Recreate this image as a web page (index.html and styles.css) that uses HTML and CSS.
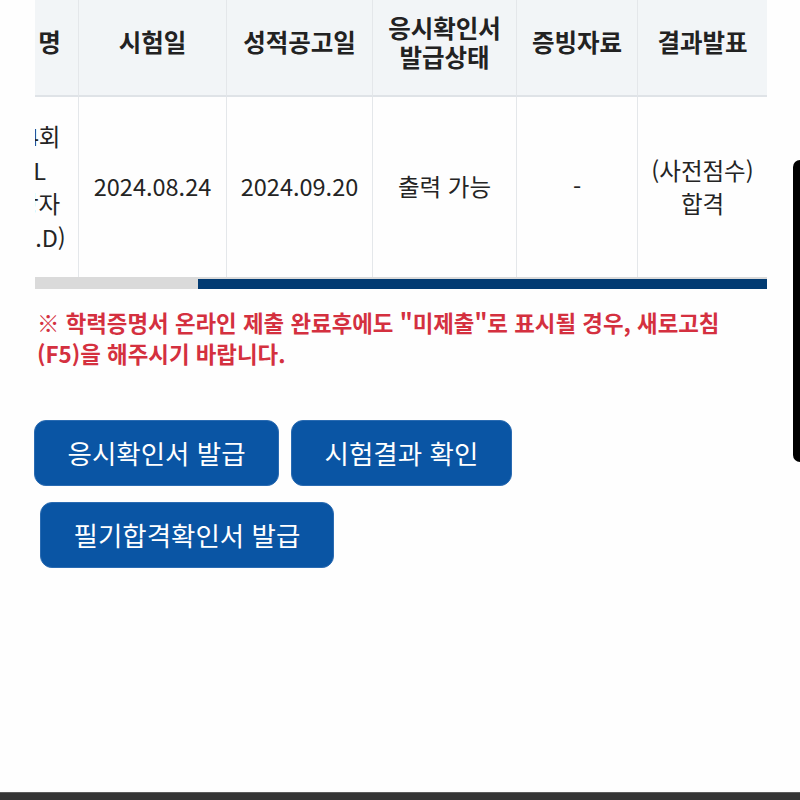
FILE: index.html
```html
<!DOCTYPE html>
<html lang="ko">
<head>
<meta charset="utf-8">
<title>시험 결과</title>
<link rel="stylesheet" href="styles.css">
</head>
<body>
<main class="page">
  <div class="table-scroll">
    <div class="grid">
      <div class="th">응시회차 시험 명</div>
      <div class="th">시험일</div>
      <div class="th">성적공고일</div>
      <div class="th">응시확인서<br>발급상태</div>
      <div class="th">증빙자료</div>
      <div class="th">결과발표</div>

      <div class="td">2024년도 제 4회<br>TEPS/TOEFL<br>일반 응시 대상자<br>(BA / MA / Ph.D)</div>
      <div class="td">2024.08.24</div>
      <div class="td">2024.09.20</div>
      <div class="td">출력 가능</div>
      <div class="td">-</div>
      <div class="td">(사전점수)<br>합격</div>
    </div>
  </div>
  <div class="scroll-track"><div class="scroll-thumb"></div></div>

  <p class="notice">※ 학력증명서 온라인 제출 완료후에도 "미제출"로 표시될 경우, 새로고침<br>(F5)을 해주시기 바랍니다.</p>

  <div class="actions">
    <div class="btn-row">
      <button class="btn" type="button">응시확인서 발급</button>
      <button class="btn" type="button">시험결과 확인</button>
    </div>
    <div class="btn-row indent">
      <button class="btn" type="button">필기합격확인서 발급</button>
    </div>
  </div>
</main>
<div class="side-indicator"></div>
<footer class="bottom-bar"></footer>
</body>
</html>
```
FILE: styles.css
```css
* { box-sizing: border-box; }

html, body {
  margin: 0;
  padding: 0;
  background: #fefefe;
}

body {
  min-height: 800px;
  display: flex;
  flex-direction: column;
  font-family: "Noto Sans CJK KR", "Noto Sans", sans-serif;
  color: #222;
}

.page {
  padding: 0 33px 0 35px;
}

.table-scroll {
  width: 732px;
  display: flex;
  justify-content: flex-end;
  overflow: hidden;
}

.grid {
  flex-shrink: 0;
  display: grid;
  grid-template-columns: 200px 148px 146px 144px 121px 130px;
}

.th,
.td {
  display: flex;
  align-items: center;
  justify-content: center;
  text-align: center;
  white-space: nowrap;
}

.th + .th,
.td + .td {
  border-left: 1px solid #e4e7ea;
}

.th {
  height: 97px;
  padding-bottom: 12px;
  background: #f2f5f7;
  border-bottom: 2px solid #dfe3e7;
  font-size: 24.5px;
  font-weight: 700;
  line-height: 29px;
  color: #222;
}

.th:first-child {
  padding-right: 6px;
}

.td {
  height: 180px;
  font-size: 23.5px;
  line-height: 33.5px;
  color: #242424;
}

.scroll-track {
  width: 732px;
  height: 12px;
  background: #dadada;
  display: flex;
  justify-content: flex-end;
  align-items: flex-end;
}

.scroll-thumb {
  width: 569px;
  height: 10px;
  background: #023b72;
}

.notice {
  margin: 18px 0 0;
  padding-left: 2px;
  font-size: 22.4px;
  font-weight: 700;
  line-height: 31px;
  color: #d4303f;
}

.actions {
  margin-top: 51px;
  margin-left: -1px;
  display: flex;
  flex-direction: column;
  gap: 16px;
}

.btn-row {
  display: flex;
  gap: 12px;
}

.btn-row.indent {
  padding-left: 6px;
}

.btn {
  height: 66px;
  padding: 0 32.5px;
  border: 1px solid #2a6bb2;
  border-radius: 12px;
  background: #0a55a4;
  color: #fff;
  font-family: "Noto Sans CJK KR", "Noto Sans", sans-serif;
  font-size: 26.5px;
  font-weight: 400;
  line-height: 1;
}

.side-indicator {
  position: fixed;
  top: 160px;
  right: 0;
  width: 7px;
  height: 302px;
  background: #000;
  border-radius: 7px 0 0 7px;
}

.bottom-bar {
  margin-top: auto;
  height: 8px;
  background: #353535;
  border-top: 1px solid #5c5c5c;
}
```
